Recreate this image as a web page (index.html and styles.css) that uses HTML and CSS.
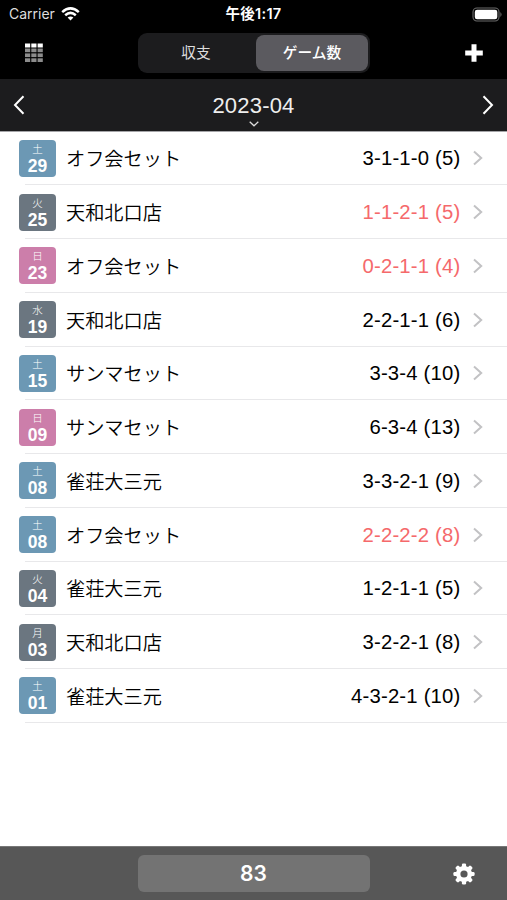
FILE: index.html
```html
<!DOCTYPE html>
<html lang="ja">
<head>
  <meta charset="UTF-8">
  <title>ゲーム数 2023-04</title>
  <link rel="stylesheet" href="styles.css">
</head>
<body>
  <!-- ステータスバー -->
  <div class="status">
    <div class="carrier">
      <span>Carrier</span>
      <svg width="19" height="14" viewBox="0 0 19 14" fill="none" stroke="#fff" stroke-width="2.5">
        <path d="M1.2 5.1 Q9.5 -2.4 17.8 5.1"/>
        <path d="M4.2 8.2 Q9.5 3.5 14.8 8.2"/>
        <path d="M9.5 13.4 L6.6 10.5 Q9.5 8.3 12.4 10.5 Z" fill="#fff" stroke="none"/>
      </svg>
    </div>
    <div class="time">午後1:17</div>
    <div class="battery">
      <svg width="31" height="15" viewBox="0 0 31 15">
        <rect x="1" y="1" width="26" height="13" rx="4" fill="none" stroke="#6b6b6b" stroke-width="1.1"/>
        <rect x="2.8" y="2.7" width="22.5" height="9.6" rx="2.3" fill="#fff"/>
        <path d="M28.4 5 Q30.7 7.5 28.4 10 Z" fill="#6b6b6b"/>
      </svg>
    </div>
  </div>

  <!-- ナビゲーション -->
  <div class="nav">
    <svg class="grid-icon" width="18" height="20" viewBox="0 0 18 20">
      <g fill="#fff"><rect x="0" y="0.5" width="5.2" height="4"/><rect x="6.3" y="0.5" width="5.2" height="4"/><rect x="12.6" y="0.5" width="5.2" height="4"/></g>
      <g fill="#8c8c8c">
        <rect x="0" y="5.5" width="5.2" height="3.7"/><rect x="6.3" y="5.5" width="5.2" height="3.7"/><rect x="12.6" y="5.5" width="5.2" height="3.7"/>
        <rect x="0" y="10.4" width="5.2" height="3.7"/><rect x="6.3" y="10.4" width="5.2" height="3.7"/><rect x="12.6" y="10.4" width="5.2" height="3.7"/>
        <rect x="0" y="15.3" width="5.2" height="3.7"/><rect x="6.3" y="15.3" width="5.2" height="3.7"/><rect x="12.6" y="15.3" width="5.2" height="3.7"/>
      </g>
    </svg>
    <div class="segment">
      <div class="seg">収支</div>
      <div class="seg active">ゲーム数</div>
    </div>
    <svg class="plus-icon" width="18" height="18" viewBox="0 0 18 18"><path d="M9 0.2V17.8M0.2 9H17.8" stroke="#fff" stroke-width="5"/></svg>
  </div>

  <!-- 月の切り替え -->
  <div class="month">
    <svg width="12" height="20" viewBox="0 0 12 20" fill="none" stroke="#fff" stroke-width="2"><path d="M10.5 1.2L2 10L10.5 18.8"/></svg>
    <div class="month-title">
      <span>2023-04</span>
      <svg class="down" width="10" height="6" viewBox="0 0 10 6" fill="none" stroke="#ddd" stroke-width="1.3"><path d="M0.7 0.8L5 4.8L9.3 0.8"/></svg>
    </div>
    <svg width="12" height="20" viewBox="0 0 12 20" fill="none" stroke="#fff" stroke-width="2"><path d="M1.5 1.2L10 10L1.5 18.8"/></svg>
  </div>

  <!-- 対局リスト -->
  <div class="list" id="list"></div>

  <!-- 合計 -->
  <div class="footer">
    <div class="total">83</div>
    <svg class="gear" width="22" height="22" viewBox="-11 -11 22 22">
      <g fill="#fff">
        <g id="teeth"><rect x="-2.1" y="-10.6" width="4.2" height="21.2" rx="1.3"/><rect x="-10.6" y="-2.1" width="21.2" height="4.2" rx="1.3"/></g>
        <use href="#teeth" transform="rotate(45)"/>
        <circle r="8"/>
      </g>
      <circle r="3.6" fill="#575757"/>
    </svg>
  </div>

  <script>
    // 曜日, 日, 場所, 着順(回数), 赤字かどうか
    const games = [
      ["土", "29", "オフ会セット", "3-1-1-0 (5)", false],
      ["火", "25", "天和北口店", "1-1-2-1 (5)", true],
      ["日", "23", "オフ会セット", "0-2-1-1 (4)", true],
      ["水", "19", "天和北口店", "2-2-1-1 (6)", false],
      ["土", "15", "サンマセット", "3-3-4 (10)", false],
      ["日", "09", "サンマセット", "6-3-4 (13)", false],
      ["土", "08", "雀荘大三元", "3-3-2-1 (9)", false],
      ["土", "08", "オフ会セット", "2-2-2-2 (8)", true],
      ["火", "04", "雀荘大三元", "1-2-1-1 (5)", false],
      ["月", "03", "天和北口店", "3-2-2-1 (8)", false],
      ["土", "01", "雀荘大三元", "4-3-2-1 (10)", false]
    ];

    // 曜日ごとの色
    function dayClass(day) {
      if (day === "土") return "sat";
      if (day === "日") return "sun";
      return "weekday";
    }

    const list = document.getElementById("list");
    games.forEach(([day, date, place, score, minus]) => {
      const row = document.createElement("div");
      row.className = "row";
      row.innerHTML = `
        <div class="badge ${dayClass(day)}"><span class="day">${day}</span><span class="date">${date}</span></div>
        <div class="cell">
          <span class="place">${place}</span>
          <span class="score${minus ? " minus" : ""}">${score}</span>
          <svg class="arrow" width="10" height="16" viewBox="0 0 10 16"><path d="M1 1.6L8.2 8L1 14.4" fill="none" stroke="#c2c2c4" stroke-width="2"/></svg>
        </div>`;
      list.appendChild(row);
    });
  </script>
</body>
</html>
```
FILE: styles.css
```css
* {
  box-sizing: border-box;
}
body {
  margin: 0;
  height: 900px;
  display: flex;
  flex-direction: column;
  overflow: hidden;
  background: #fff;
  font-family: "Liberation Sans", "Noto Sans CJK JP", sans-serif;
}
svg {
  display: block;
  flex: none;
}
/* ステータスバー */
.status {
  height: 26px;
  flex: none;
  display: grid;
  grid-template-columns: 1fr auto 1fr;
  align-items: center;
  padding: 0 4px;
  background: #000;
  color: #fff;
  font-family: Inter, "Noto Sans CJK JP", sans-serif;
  font-size: 14px;
  line-height: 28px;
}
.carrier {
  display: flex;
  align-items: center;
  gap: 6px;
  padding-left: 5px;
  color: #ddd;
}
.time {
  font-weight: 600;
  font-size: 14.5px;
  letter-spacing: 0.3px;
}
.battery {
  justify-self: end;
}
/* ナビゲーション */
.nav {
  height: 53px;
  flex: none;
  display: flex;
  justify-content: space-between;
  align-items: center;
  padding: 0 24px 0 25px;
  background: #000;
}
.segment {
  display: flex;
  width: 232px;
  height: 40px;
  padding: 2px;
  border-radius: 9px;
  background: #1c1c1e;
}
.seg {
  flex: 1;
  padding-right: 4px;
  line-height: 34px;
  text-align: center;
  color: #ddd;
  font-family: "Noto Sans CJK JP", sans-serif;
  font-size: 14.7px;
}
.seg.active {
  flex: 0 0 112px;
  padding-right: 0;
  border-radius: 8px;
  background: #5b5a5f;
  color: #fff;
  font-weight: 500;
}
/* 月の切り替え */
.month {
  height: 53px;
  flex: none;
  display: flex;
  justify-content: space-between;
  align-items: center;
  padding: 0 13px;
  background: #1c1c1e;
  border-bottom: 1px solid #a5a5a8;
}
.month-title {
  position: relative;
  color: #eee;
  font-size: 22px;
  line-height: 53px;
  letter-spacing: 0.2px;
}
.down {
  position: absolute;
  left: 37px;
  bottom: 5px;
}
/* リスト */
.list {
  flex: 1;
  margin-top: -0.5px;
}
.row {
  height: 53.75px;
  display: flex;
  align-items: center;
  padding-left: 19px;
  background: linear-gradient(#e8e8ea, #e8e8ea) 25px 100% / 100% 1px no-repeat;
}
.badge {
  width: 37px;
  height: 37px;
  flex: none;
  display: flex;
  flex-direction: column;
  align-items: center;
  border-radius: 4px;
  color: #fff;
}
.sat {
  background: #6c98b4;
}
.sun {
  background: #cc7eaa;
}
.weekday {
  background: #6b7680;
}
.day {
  height: 17px;
  font-family: "Noto Sans CJK JP", sans-serif;
  font-size: 10.5px;
  font-weight: 300;
  line-height: 18px;
}
.date {
  font-size: 17.5px;
  font-weight: bold;
  line-height: 18px;
}
.cell {
  flex: 1;
  display: flex;
  align-items: center;
  padding: 0 24.5px 0 10px;
}
.place {
  flex: 1;
  font-family: "Noto Sans CJK JP", sans-serif;
  font-size: 19.2px;
  font-weight: 350;
  line-height: 36px;
}
.score {
  padding-top: 1px;
  font-size: 20.3px;
  letter-spacing: 0.2px;
}
.minus {
  color: #f5696b;
}
.arrow {
  margin-left: 12px;
}
/* フッター */
.footer {
  height: 54px;
  flex: none;
  display: grid;
  grid-template-columns: 1fr 232px 1fr;
  align-items: center;
  background: #575757;
  border-top: 1px solid #777;
}
.total {
  grid-column: 2;
  height: 37px;
  border-radius: 6px;
  background: #737373;
  color: #fff;
  font-family: Inter, sans-serif;
  font-size: 21px;
  font-weight: 600;
  line-height: 37px;
  text-align: center;
}
.gear {
  justify-self: end;
  margin-right: 32px;
}
```
